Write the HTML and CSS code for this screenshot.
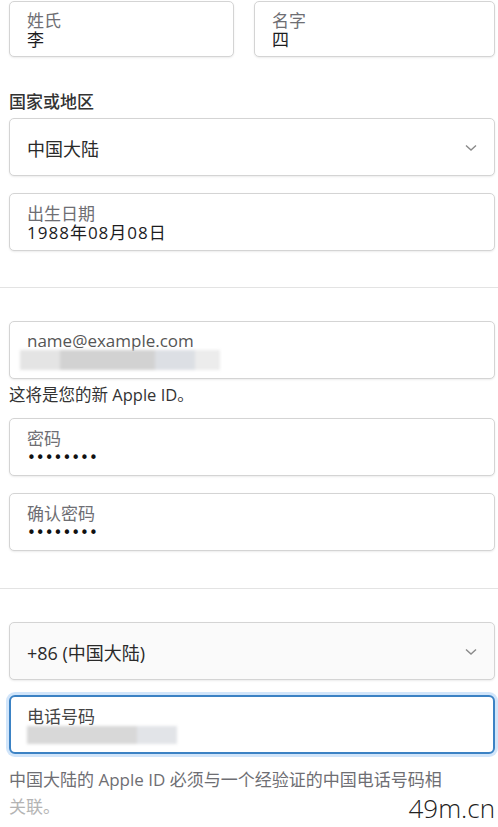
FILE: index.html
```html
<!DOCTYPE html>
<html lang="zh-CN">
<head>
  <meta charset="UTF-8" />
  <meta name="viewport" content="width=device-width, initial-scale=1.0"/>
  <title>创建 Apple ID</title>
  <link rel="stylesheet" href="styles.css">
</head>
<body>

  <div class="form">
    <div class="name-row">
      <div class="field">
        <span class="label">姓氏</span>
        <span class="value">李</span>
      </div>
      <div class="field">
        <span class="label">名字</span>
        <span class="value">四</span>
      </div>
    </div>

    <div class="section-title">国家或地区</div>
    <div class="field select">
      <span class="select-text">中国大陆</span>
      <svg class="chevron" width="12" height="8" viewBox="0 0 12 8"><path d="M1 1.5 L6 6 L11 1.5" fill="none" stroke="#8a8a8a" stroke-width="1.4"/></svg>
    </div>

    <div class="field">
      <span class="label">出生日期</span>
      <span class="value date">1988年08月08日</span>
    </div>

    <hr class="divider">

    <div class="field email">
      <span class="label">name@example.com</span>
      <div class="blurred">
        <span class="blot b1"></span><span class="blot b2"></span><span class="blot b3"></span><span class="blot b4"></span>
      </div>
    </div>
    <div class="hint">这将是您的新 Apple ID。</div>

    <div class="field">
      <span class="label">密码</span>
      <span class="dots">••••••••</span>
    </div>
    <div class="field">
      <span class="label">确认密码</span>
      <span class="dots">••••••••</span>
    </div>

    <hr class="divider second">

    <div class="field select grey">
      <span class="select-text">+86 (中国大陆)</span>
      <svg class="chevron" width="12" height="8" viewBox="0 0 12 8"><path d="M1 1.5 L6 6 L11 1.5" fill="none" stroke="#8a8a8a" stroke-width="1.4"/></svg>
    </div>

    <div class="field focused">
      <span class="label">电话号码</span>
      <div class="blurred phone">
        <span class="blot p1"></span><span class="blot p2"></span>
      </div>
    </div>

    <p class="footnote">中国大陆的 Apple ID 必须与一个经验证的中国电话号码相<br><span class="fade">关联。</span></p>
  </div>

  <div class="watermark">49m.cn</div>

</body>
</html>
```

FILE: styles.css
```css
  * {
    box-sizing: border-box;
  }
  body {
    margin: 0;
    background: #fff;
    font-family: "Open Sans", "Noto Sans CJK SC", sans-serif;
    color: #1d1d1f;
    position: relative;
    min-height: 827px;
  }
  .form {
    padding: 1px 3px 0 9px;
    display: flex;
    flex-direction: column;
  }
  .name-row {
    display: grid;
    grid-template-columns: 225px 1fr;
    gap: 20px;
  }
  .field {
    height: 58px;
    border: 1px solid #d4d4d4;
    border-radius: 5px;
    box-shadow: 0 1px 2px rgba(0, 0, 0, 0.08);
    background: #fff;
    display: flex;
    flex-direction: column;
    justify-content: center;
    padding: 1px 0 0 17px;
    margin-bottom: 17px;
  }
  .name-row .field {
    height: 56px;
    margin-bottom: 0;
  }
  .label {
    font-size: 17px;
    line-height: 19px;
    color: #6e6e73;
  }
  .value {
    font-size: 17px;
    line-height: 19px;
    color: #1d1d1f;
  }
  .date {
    letter-spacing: 1px;
  }
  .section-title {
    margin-top: 35px;
    margin-bottom: 6px;
    font-size: 17px;
    line-height: 20px;
    font-weight: 500;
    color: #333;
  }
  .select {
    flex-direction: row;
    align-items: center;
    justify-content: space-between;
    padding-right: 17px;
  }
  .select.grey {
    background: #fafafa;
    margin-bottom: 15px;
  }
  .select-text {
    font-size: 18px;
    color: #2a2a2a;
  }
  .divider {
    border: none;
    border-top: 1px solid #e3e3e3;
    margin: 19px -3px 33px -9px;
  }
  .divider.second {
    margin-top: 20px;
  }
  .email {
    margin-bottom: 6px;
  }
  .email .label {
    color: #555;
  }
  .blurred {
    display: flex;
    height: 20px;
    margin-left: -7px;
    filter: blur(1.5px);
  }
  .blot {
    height: 100%;
    background: #d9d9d9;
  }
  .b1 { width: 40px; background: #e4e4e4; }
  .b2 { width: 95px; background: #d2d2d2; }
  .b3 { width: 40px; background: #dcdfe4; }
  .b4 { width: 25px; background: #ececec; }
  .hint {
    font-size: 16.5px;
    line-height: 20px;
    color: #333;
    margin-bottom: 13px;
  }
  .dots {
    font-family: "DejaVu Sans", sans-serif;
    font-size: 15px;
    line-height: 16px;
    color: #111;
    padding-top: 2px;
  }
  .focused {
    border: 2px solid #3b82c4;
    border-radius: 6px;
    box-shadow: 0 0 0 3px rgba(0, 113, 227, 0.18);
    height: 59px;
    padding-left: 16px;
    margin-bottom: 0;
  }
  .focused .label {
    color: #444;
  }
  .phone {
    margin-left: 0;
    width: 150px;
    height: 18px;
  }
  .p1 { width: 110px; background: #d8d8d8; }
  .p2 { width: 40px; background: #e2e4e8; }
  .footnote {
    margin: 12px 0 0 0;
    font-size: 17px;
    line-height: 27px;
    color: #6e6e73;
  }
  .fade {
    color: #b4b4b4;
  }
  .watermark {
    position: absolute;
    right: 3px;
    bottom: 1px;
    font-family: "Open Sans", sans-serif;
    font-weight: 300;
    font-size: 26px;
    color: #222;
  }
```
